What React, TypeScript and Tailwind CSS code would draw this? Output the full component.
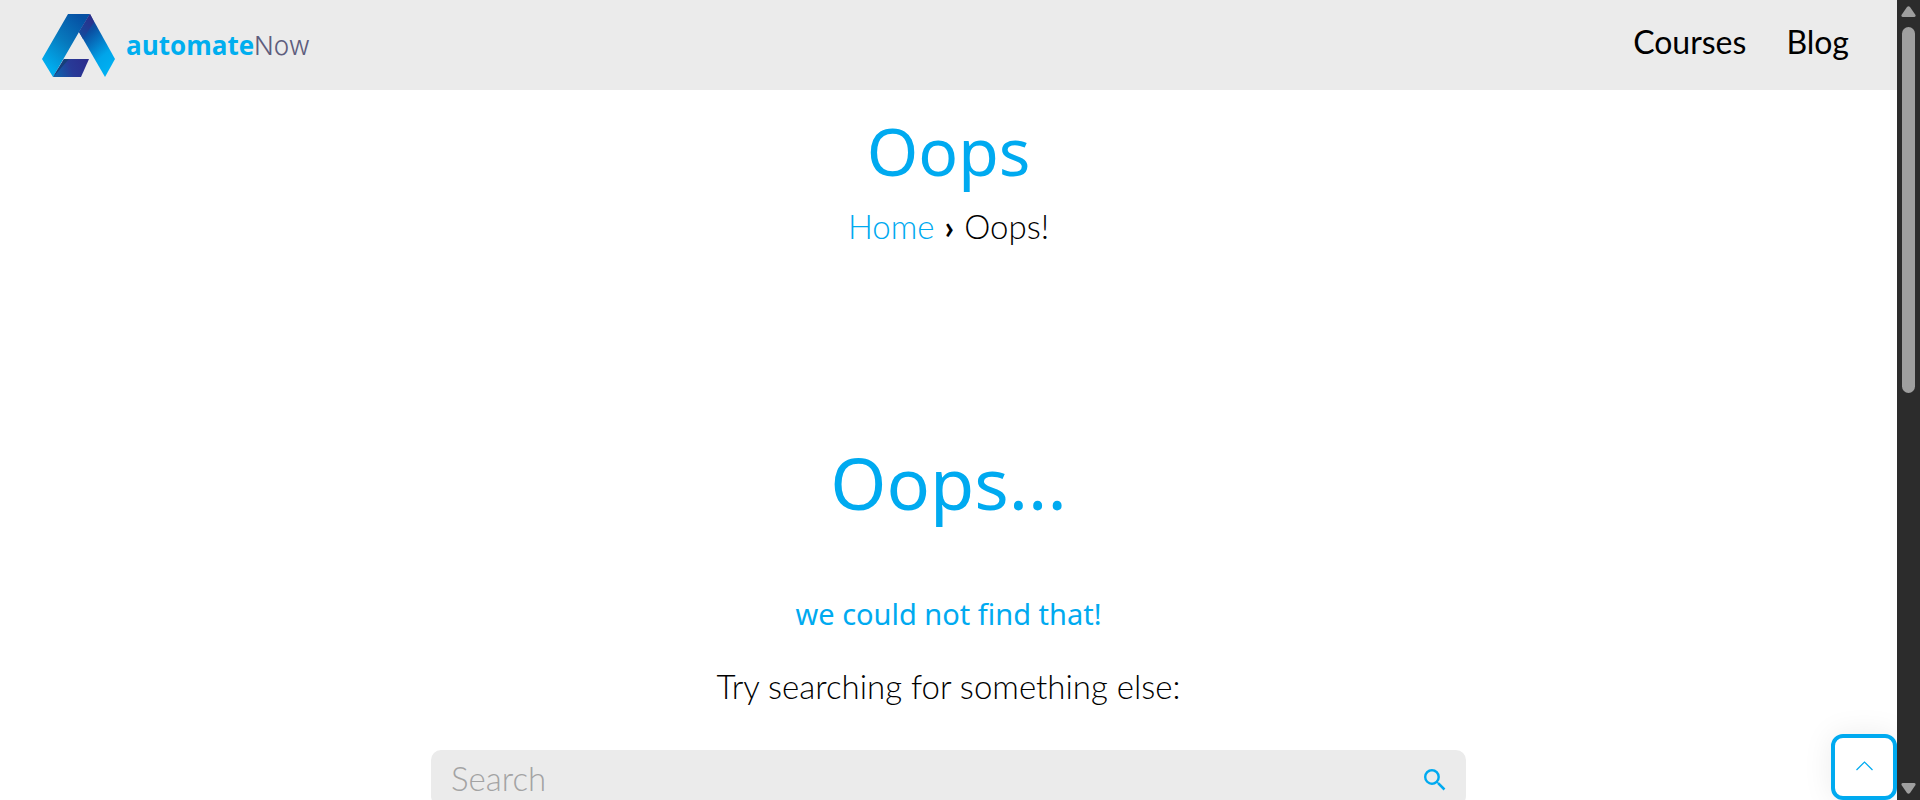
import React from "react";

function Logo() {
  return (
    <a href="#home" aria-label="automateNow" className="flex items-center gap-[11px]">
      <svg viewBox="0 0 73 63" className="h-[63px] w-[73px]" aria-hidden="true">
        <defs>
          <linearGradient id="left" x1="0.75" y1="0" x2="0.15" y2="0.85">
            <stop offset="0" stopColor="#0650a3" />
            <stop offset="0.5" stopColor="#0779bd" />
            <stop offset="1" stopColor="#00adef" />
          </linearGradient>
          <linearGradient id="right" x1="0.25" y1="0" x2="0.75" y2="1">
            <stop offset="0" stopColor="#2b2f8c" />
            <stop offset="0.25" stopColor="#0a4fa2" />
            <stop offset="0.7" stopColor="#00a5ea" />
            <stop offset="1" stopColor="#00b2f3" />
          </linearGradient>
          <linearGradient id="foot" x1="0" y1="0.6" x2="1" y2="0.4">
            <stop offset="0" stopColor="#0b64ad" />
            <stop offset="0.5" stopColor="#283a97" />
            <stop offset="1" stopColor="#2b2d8d" />
          </linearGradient>
          <linearGradient id="fold" x1="0.8" y1="0" x2="0.2" y2="1">
            <stop offset="0" stopColor="#2e2b88" />
            <stop offset="1" stopColor="#124d9f" />
          </linearGradient>
        </defs>
        <path d="M26 0H48L37 18L11 63L0 45Z" fill="url(#left)" />
        <path d="M48 0L73 45L63 63L37 18Z" fill="url(#right)" />
        <path d="M48 0L37 18L41 25L52 8Z" fill="url(#fold)" />
        <path d="M22 45H47L39 63H11Z" fill="url(#foot)" />
        <path d="M22 45H27L11 63Z" fill="#173f79" />
      </svg>
      <span className="text-[26px] leading-8">
        <span className="font-['Open_Sans',sans-serif] font-bold text-[#00aeef]">automate</span>
        <span className="font-['Inter',sans-serif] font-light text-[#5e5d7d]">Now</span>
      </span>
    </a>
  );
}

function Scrollbar() {
  return (
    <div aria-hidden="true" className="flex w-[23px] shrink-0 flex-col items-center bg-[#2c2c2c] py-1.5">
      <svg viewBox="0 0 15 12" className="h-3 w-[15px] shrink-0" fill="#9f9f9f">
        <path d="M6 1Q7.500 -.5 9 1L14.500 9Q15 11 13 11H2Q0 11 .5 9Z" />
      </svg>
      <div className="mt-[9px] h-[46.5%] w-[13px] rounded-full bg-[#9f9f9f]" />
      <svg viewBox="0 0 15 12" className="mt-auto h-3 w-[15px] shrink-0" fill="#9f9f9f">
        <path d="M6 11Q7.500 12.500 9 11L14.500 3Q15 1 13 1H2Q0 1 .5 3Z" />
      </svg>
    </div>
  );
}

export default function App() {
  return (
    <div className="flex h-screen overflow-hidden bg-white font-['Lato',sans-serif] text-black">
      <div className="relative min-w-0 flex-1 overflow-hidden">
        <header className="flex h-[90px] items-center justify-between bg-[#ebebeb] pr-12 pl-[42px]">
          <Logo />
          <nav className="flex gap-10 pb-1.5 text-[32px] leading-10">
            <a href="#courses">Courses</a>
            <a href="#blog">Blog</a>
          </nav>
        </header>
        <main className="flex flex-col items-center text-center">
          <h1 className="mt-4 font-['Noto_Sans',sans-serif] text-[66px] leading-[88px] text-[#00aaf0]">Oops</h1>
          <nav aria-label="Breadcrumb" className="mt-3 flex gap-2.5 text-[33px] leading-10 font-light">
            <a href="#home" className="text-[#00aaf0]">Home</a>
            <span className="font-bold">›</span>
            <span>Oops!</span>
          </nav>
          <h2 className="mt-[188px] font-['Noto_Sans',sans-serif] text-[72px] leading-[96px] text-[#00aaf0]">Oops...</h2>
          <h3 className="mt-16 font-['Noto_Sans',sans-serif] text-[29px] leading-10 text-[#00aaf0]">we could not find that!</h3>
          <p className="mt-8 text-[33px] leading-10 font-light">Try searching for something else:</p>
          <form role="search" className="mt-11 flex h-14 w-full max-w-[1035px] items-center rounded-[10px] bg-[#ebebeb] pr-5 pl-5">
            <input
              type="search"
              aria-label="Search"
              placeholder="Search"
              className="min-w-0 flex-1 bg-transparent text-[33px] leading-10 font-light outline-none placeholder:text-[#a3a3a3]"
            />
            <button type="submit" aria-label="Submit search" className="pt-1">
              <svg viewBox="3 3 18 18" className="h-[22px] w-[22px]" fill="#00aaf0">
                <path d="M15.500 14h-.79l-.28-.27A6.470 6.470 0 0 0 16 9.500 6.500 6.500 0 1 0 9.500 16c1.610 0 3.090-.59 4.230-1.570l.27.28v.79l5 4.990L20.490 19l-4.990-5zm-6 0C7.010 14 5 11.990 5 9.500S7.010 5 9.500 5 14 7.010 14 9.500 11.990 14 9.500 14z" />
              </svg>
            </button>
          </form>
        </main>
        <button
          type="button"
          aria-label="Back to top"
          className="absolute right-0 bottom-0 flex size-[66px] items-center justify-center rounded-xl border-4 border-[#00aaf0] bg-white pb-0.5 shadow-[0_0_30px_rgba(0,0,0,0.08)]"
        >
          <svg viewBox="0 0 17 10" className="h-[10px] w-[17px]" fill="none" stroke="#00aaf0" strokeWidth="1.2">
            <path d="M.5 9L8.500 1L16.500 9" />
          </svg>
        </button>
      </div>
      <Scrollbar />
    </div>
  );
}
